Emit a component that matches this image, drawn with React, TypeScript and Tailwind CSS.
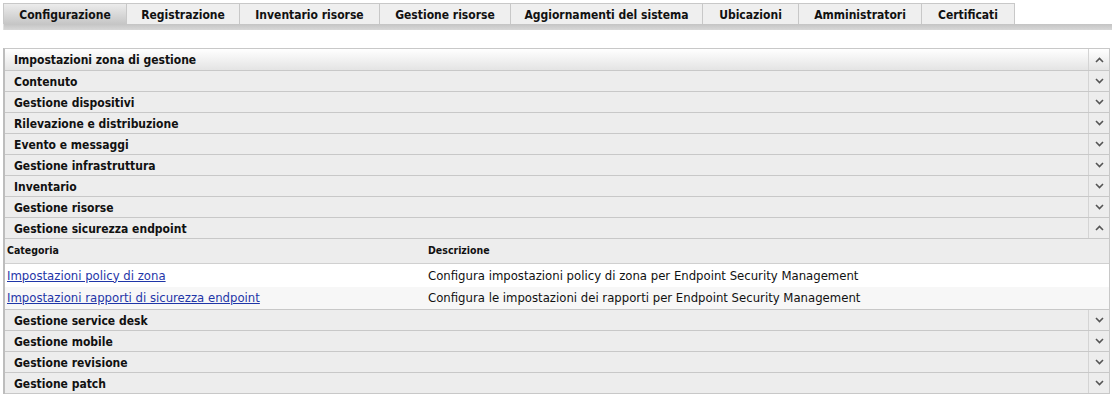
const tabs = [
  { label: "Configurazione", w: "w-[124px]", active: true },
  { label: "Registrazione", w: "w-[113px]" },
  { label: "Inventario risorse", w: "w-[140px]" },
  { label: "Gestione risorse", w: "w-[131px]" },
  { label: "Aggiornamenti del sistema", w: "w-[192px]" },
  { label: "Ubicazioni", w: "w-[96px]" },
  { label: "Amministratori", w: "w-[123px]" },
  { label: "Certificati", w: "w-[93px]" },
];

const before = [
  "Contenuto",
  "Gestione dispositivi",
  "Rilevazione e distribuzione",
  "Evento e messaggi",
  "Gestione infrastruttura",
  "Inventario",
  "Gestione risorse",
];

const after = ["Gestione service desk", "Gestione mobile", "Gestione revisione", "Gestione patch"];

const Chevron = ({ up }: { up?: boolean }) => (
  <svg width="9" height="6" viewBox="0 0 9 6" className="text-[#555]">
    <path
      d={up ? "M1 5 L4.5 1.5 L8 5" : "M1 1 L4.5 4.5 L8 1"}
      fill="none"
      stroke="currentColor"
      strokeWidth="1.6"
    />
  </svg>
);

const Row = ({ label, up, header }: { label: string; up?: boolean; header?: boolean }) => (
  <div
    className={
      "flex border-b border-[#c8c8c8] " +
      (header ? "h-[22px] bg-gradient-to-b from-[#ffffff] to-[#e4e4e4]" : "h-[21px] bg-[#ededed]")
    }
  >
    <div className="flex-1 pl-[9px] pt-px flex items-center text-[12px] font-bold text-[#111]">{label}</div>
    <div className="w-[21px] border-l border-[#d4d4d4] flex items-center justify-center">
      <Chevron up={up} />
    </div>
  </div>
);

export default function App() {
  return (
    <div className="w-[1112px] h-[398px] bg-white font-['DejaVu_Sans_Condensed','Liberation_Sans',sans-serif] text-[#111]">
      <div className="pt-[3px] pl-[3px]">
        <div className="flex">
          {tabs.map((t) => (
            <div
              key={t.label}
              className={
                t.w +
                " h-[21px] flex items-center justify-center pt-px text-[12px] font-bold border-t border-r border-[#c8c8c8] " +
                (t.active
                  ? "bg-gradient-to-b from-[#ececec] to-[#c6c6c6] border-l"
                  : "bg-[#efefef]")
              }
            >
              {t.label}
            </div>
          ))}
        </div>
        <div className="h-[6px] bg-gradient-to-b from-[#c4c4c4] to-[#d8d8d8] border-l border-[#e0e0e0]" />
      </div>

      <div className="mt-[18px] ml-[3px] mr-[2px] border-t border-r border-[#c8c8c8] border-l-2 border-l-[#bdbdbd]">
        <Row label="Impostazioni zona di gestione" up header />
        {before.map((l) => (
          <Row key={l} label={l} />
        ))}
        <Row label="Gestione sicurezza endpoint" up />
        <div className="flex h-[25px] items-center bg-[#ededed] border-b border-[#d0d0d0] text-[10.5px] font-bold">
          <div className="w-[423px] pl-[2px]">Categoria</div>
          <div>Descrizione</div>
        </div>
        <div className="flex h-[23px] items-center bg-white text-[13px]">
          <a href="#" className="w-[423px] pl-[2px] text-[#1f36a8] underline">
            Impostazioni policy di zona
          </a>
          <div>Configura impostazioni policy di zona per Endpoint Security Management</div>
        </div>
        <div className="flex h-[23px] items-center bg-[#f7f7f7] border-b border-[#c8c8c8] text-[13px]">
          <a href="#" className="w-[423px] pl-[2px] text-[#1f36a8] underline">
            Impostazioni rapporti di sicurezza endpoint
          </a>
          <div>Configura le impostazioni dei rapporti per Endpoint Security Management</div>
        </div>
        {after.map((l) => (
          <Row key={l} label={l} />
        ))}
      </div>
    </div>
  );
}
